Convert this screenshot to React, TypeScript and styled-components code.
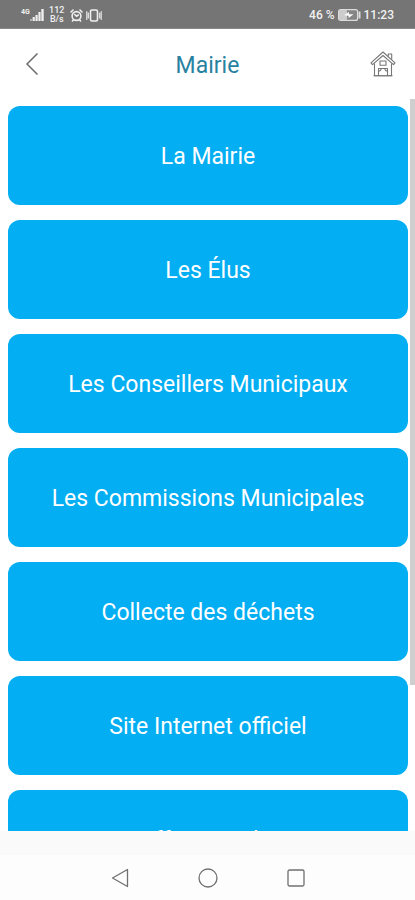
import React from "react";
import styled, { createGlobalStyle } from "styled-components";

const GlobalStyle = createGlobalStyle`
  *, *::before, *::after { box-sizing: border-box; }
  body { margin: 0; background: #ffffff; font-family: Roboto, "Liberation Sans", sans-serif; }
  button { border: 0; padding: 0; background: none; font: inherit; color: inherit; cursor: pointer; }
  svg { display: block; flex: none; }
`;

const Screen = styled.div`
  display: flex;
  flex-direction: column;
  height: 100vh;
  overflow: hidden;
`;

const StatusBar = styled.div`
  display: flex;
  flex: none;
  align-items: center;
  justify-content: space-between;
  height: 29px;
  padding: 2px 21px 0;
  background: #757575;
  border-bottom: 1px solid #8a8a8a;
  color: #f0f0f0;
  font-size: 12px;
  line-height: 14px;
  font-weight: 500;
`;

const StatusGroup = styled.div`
  display: flex;
  align-items: center;
  gap: 3px;
`;

const Signal = styled.div`
  display: flex;
  align-items: flex-start;
  font-size: 7px;
  line-height: 7px;
  font-weight: 700;
`;

const Speed = styled.div`
  display: flex;
  flex-direction: column;
  align-items: center;
  width: 16px;
  margin: 0 2px;
  font-size: 9px;
  line-height: 9px;
`;

const Header = styled.header`
  display: grid;
  flex: none;
  grid-template-columns: 64px 1fr 64px;
  align-items: center;
  height: 70px;
  background: #ffffff;
`;

const Title = styled.h1`
  margin: 0;
  padding-top: 4px;
  color: #28829f;
  font-size: 23px;
  line-height: 28px;
  font-weight: 400;
  text-align: center;
`;

const IconButton = styled.button`
  display: flex;
  align-items: center;
  justify-content: center;
  height: 48px;
`;

const Main = styled.main`
  position: relative;
  display: flex;
  flex: 1;
  min-height: 0;
`;

const Menu = styled.nav`
  display: flex;
  flex: 1;
  flex-direction: column;
  gap: 15px;
  padding: 7px 7px 7px 8px;
  overflow-y: auto;
  scrollbar-width: none;
`;

const MenuButton = styled.button`
  flex: none;
  height: 99px;
  padding-top: 2px;
  border-radius: 12px;
  background: #03aef2;
  color: #ffffff;
  font-size: 23px;
  line-height: 28px;
  text-align: center;
`;

const ScrollThumb = styled.div`
  position: absolute;
  top: 0;
  right: 0;
  width: 5px;
  height: 80%;
  background: #cfcfcf;
`;

const BottomSpace = styled.div`
  flex: none;
  height: 24px;
  background: #fafafa;
`;

const SystemNav = styled.nav`
  display: flex;
  flex: none;
  align-items: center;
  justify-content: center;
  gap: 40px;
  height: 45px;
  background: #fdfdfd;
`;

const NavButton = styled.button`
  display: flex;
  align-items: center;
  justify-content: center;
  width: 48px;
  height: 44px;
`;

const entries = [
  "La Mairie",
  "Les Élus",
  "Les Conseillers Municipaux",
  "Les Commissions Municipales",
  "Collecte des déchets",
  "Site Internet officiel",
  "Offres emploi",
];

const SignalBars = () => (
  <svg width="14" height="12" viewBox="0 0 14 12" fill="#efefef" aria-hidden="true">
    <rect x="0" y="10" width="2" height="2" opacity=".5" />
    <rect x="2.6" y="8" width="2.2" height="4" />
    <rect x="5.5" y="6" width="2.2" height="6" />
    <rect x="8.4" y="3" width="2.2" height="9" />
    <rect x="11.3" y="0" width="2.4" height="12" />
  </svg>
);

const AlarmIcon = () => (
  <svg width="13" height="13" viewBox="0 0 13 13" fill="none" stroke="#efefef" strokeWidth="1.6" strokeLinecap="round" aria-hidden="true">
    <circle cx="6.5" cy="7" r="4.4" />
    <path d="M1 3 3 1M12 3 10 1M4.7 5.5 6.5 7.3 8.3 6M3.2 11l-.7 1M9.8 11l.7 1" />
  </svg>
);

const VibrateIcon = () => (
  <svg width="16" height="13" viewBox="0 0 16 13" fill="none" stroke="#efefef" strokeWidth="1.6" strokeLinecap="round" aria-hidden="true">
    <rect x="4.5" y="1" width="7" height="11" rx="1.4" />
    <path d="M2.3 4v5M.8 2.5v8M13.7 4v5M15.2 2.5v8" strokeWidth="1.1" />
  </svg>
);

const BatteryIcon = () => (
  <svg width="23" height="12" viewBox="0 0 23 12" aria-hidden="true">
    <rect x=".6" y=".6" width="19" height="10.8" rx="2" fill="#858585" stroke="#dcdcdc" strokeWidth="1.2" />
    <rect x="1" y="1" width="8" height="10" rx="1" fill="#cccccc" />
    <path d="M6 6.3 11 3v2.2h4.5L10.6 9V6.8z" fill="#ffffff" />
    <path d="M21.5 2.5v7" stroke="#dcdcdc" strokeWidth="2" />
  </svg>
);

const BackIcon = () => (
  <svg width="14" height="24" viewBox="0 0 14 24" fill="none" stroke="#6c6c6c" strokeWidth="1.5" aria-hidden="true">
    <path d="M12.5 1.5 2 12l10.5 10.5" />
  </svg>
);

const HouseIcon = () => (
  <svg width="26" height="26" viewBox="0 0 26 26" fill="none" stroke="#777777" strokeWidth="1.1" strokeLinejoin="round" aria-hidden="true">
    <path d="M1 11.8 13 1l12 10.8-1.5 1.9L13 4.5 2.5 13.7z" />
    <path d="M18.3 5.6V3h3.4v5.6" />
    <path d="M4.5 12.5v12.3h17V12.5" />
    <path d="M10 10h6v4.2h-6z" />
    <path d="M8.5 24.8v-7.3h9v7.3M8.7 20.2c1.6-.3 2.4-1.2 2.6-2.6M17.3 20.2c-1.6-.3-2.4-1.2-2.6-2.6M3.5 24.8h19" />
  </svg>
);

export default function App() {
  return (
    <Screen>
      <GlobalStyle />
      <StatusBar>
        <StatusGroup>
          <Signal>
            <span>4G</span>
            <SignalBars />
          </Signal>
          <Speed>
            <span>112</span>
            <span>B/s</span>
          </Speed>
          <AlarmIcon />
          <VibrateIcon />
        </StatusGroup>
        <StatusGroup>
          <span>46 %</span>
          <BatteryIcon />
          <span>11:23</span>
        </StatusGroup>
      </StatusBar>
      <Header>
        <IconButton aria-label="Retour">
          <BackIcon />
        </IconButton>
        <Title>Mairie</Title>
        <IconButton aria-label="Accueil">
          <HouseIcon />
        </IconButton>
      </Header>
      <Main>
        <Menu aria-label="Mairie">
          {entries.map((entry) => (
            <MenuButton key={entry}>{entry}</MenuButton>
          ))}
        </Menu>
        <ScrollThumb />
      </Main>
      <BottomSpace />
      <SystemNav aria-label="Navigation">
        <NavButton aria-label="Précédent">
          <svg width="18" height="20" viewBox="0 0 18 20" fill="none" stroke="#707070" strokeWidth="1.3" strokeLinejoin="round" aria-hidden="true">
            <path d="M16.5 1.5v17L1.5 10z" />
          </svg>
        </NavButton>
        <NavButton aria-label="Écran d'accueil">
          <svg width="20" height="20" viewBox="0 0 20 20" fill="none" stroke="#707070" strokeWidth="1.3" aria-hidden="true">
            <circle cx="10" cy="10" r="9" />
          </svg>
        </NavButton>
        <NavButton aria-label="Applications récentes">
          <svg width="18" height="18" viewBox="0 0 18 18" fill="none" stroke="#707070" strokeWidth="1.3" aria-hidden="true">
            <rect x="1" y="1" width="16" height="16" rx="1.5" />
          </svg>
        </NavButton>
      </SystemNav>
    </Screen>
  );
}
